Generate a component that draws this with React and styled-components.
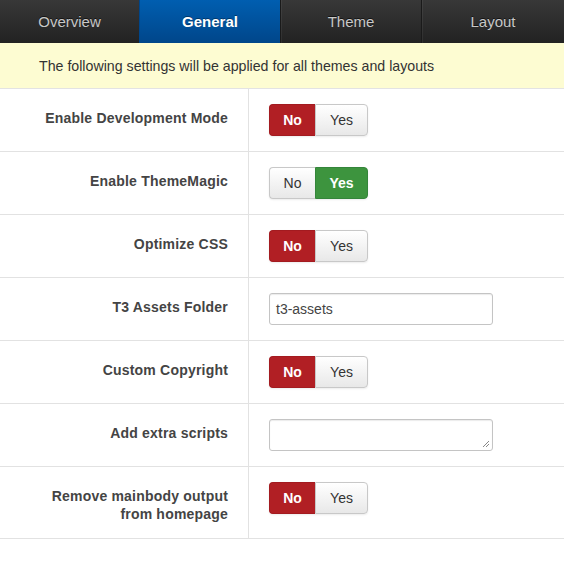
import React from "react";
import styled, { createGlobalStyle, css } from "styled-components";

const GlobalStyle = createGlobalStyle`
  html, body { margin: 0; padding: 0; background: #fff; }
  body { font-family: "Liberation Sans", Arial, sans-serif; color: #333; }
  * { box-sizing: border-box; }
`;

const Page = styled.div`
  width: 564px;
  background: #fff;
`;

const TabBar = styled.nav`
  display: grid;
  grid-template-columns: 139px 141px 141px 1fr;
  height: 43px;
  background: linear-gradient(#383838, #222222);
`;

const Tab = styled.div`
  display: flex;
  align-items: center;
  justify-content: center;
  font-size: 15px;
  color: #c8c8c8;
  text-shadow: 0 -1px 0 rgba(0, 0, 0, 0.6);
  border-left: 1px solid #1a1a1a;
  box-shadow: inset 1px 0 0 rgba(255, 255, 255, 0.06);
  &:first-child { border-left: none; box-shadow: none; }
  ${(p) =>
    p.$active &&
    css`
      background: linear-gradient(#005eb0, #00468a);
      color: #fff;
      font-weight: bold;
      border-left-color: #00468a;
      box-shadow: none;
      text-shadow: 0 -1px 0 rgba(0, 0, 0, 0.35);
    `}
`;

const Notice = styled.div`
  height: 46px;
  display: flex;
  align-items: center;
  padding-left: 39px;
  background: #fdfcd2;
  border-bottom: 1px solid #e3e3e3;
  font-size: 14.2px;
  color: #333;
`;

const Row = styled.div`
  display: grid;
  grid-template-columns: 249px 1fr;
  border-bottom: 1px solid #e2e2e2;
`;

const Label = styled.div`
  border-right: 1px solid #e2e2e2;
  padding: 20px 20px 15px 0;
  text-align: right;
  font-size: 14px;
  font-weight: bold;
  letter-spacing: 0.2px;
  line-height: 18px;
  color: #444;
`;

const Control = styled.div`
  padding: 15px 0 15px 20px;
  display: flex;
  align-items: flex-start;
`;

const Toggle = styled.div`
  display: inline-flex;
  height: 32px;
  border-radius: 4px;
  box-shadow: 0 1px 2px rgba(0, 0, 0, 0.08);
`;

const ToggleBtn = styled.div`
  display: flex;
  align-items: center;
  justify-content: center;
  width: ${(p) => p.$w}px;
  font-size: 14px;
  color: #333;
  background: linear-gradient(#ffffff, #e8e8e8);
  border: 1px solid #c8c8c8;
  &:first-child { border-radius: 4px 0 0 4px; border-right: none; }
  &:last-child { border-radius: 0 4px 4px 0; }
  ${(p) =>
    p.$on === "no" &&
    css`
      background: #b11f24;
      border-color: #a31b20;
      color: #fff;
      font-weight: bold;
    `}
  ${(p) =>
    p.$on === "yes" &&
    css`
      background: #3d943e;
      border-color: #34853a;
      color: #fff;
      font-weight: bold;
    `}
`;

const TextInput = styled.div`
  width: 224px;
  height: 32px;
  border: 1px solid #c4c4c4;
  border-radius: 3px;
  box-shadow: inset 0 1px 1px rgba(0, 0, 0, 0.08);
  padding: 0 6px;
  display: flex;
  align-items: center;
  font-size: 14px;
  color: #444;
  position: relative;
`;

const Grip = styled.svg`
  position: absolute;
  right: 2px;
  bottom: 2px;
`;

function YesNo({ value }) {
  return (
    <Toggle>
      <ToggleBtn $w={46} $on={value === "no" ? "no" : undefined}>No</ToggleBtn>
      <ToggleBtn $w={53} $on={value === "yes" ? "yes" : undefined}>Yes</ToggleBtn>
    </Toggle>
  );
}

const rows = [
  { label: "Enable Development Mode", kind: "toggle", value: "no" },
  { label: "Enable ThemeMagic", kind: "toggle", value: "yes" },
  { label: "Optimize CSS", kind: "toggle", value: "no" },
  { label: "T3 Assets Folder", kind: "input", value: "t3-assets" },
  { label: "Custom Copyright", kind: "toggle", value: "no" },
  { label: "Add extra scripts", kind: "textarea" },
  { label: ["Remove mainbody output", "from homepage"], kind: "toggle", value: "no" },
];

export default function App() {
  return (
    <Page>
      <GlobalStyle />
      <TabBar>
        <Tab>Overview</Tab>
        <Tab $active>General</Tab>
        <Tab>Theme</Tab>
        <Tab>Layout</Tab>
      </TabBar>
      <Notice>The following settings will be applied for all themes and layouts</Notice>
      {rows.map((r, i) => (
        <Row key={i}>
          <Label>
            {Array.isArray(r.label)
              ? r.label.map((l, j) => <div key={j}>{l}</div>)
              : r.label}
          </Label>
          <Control>
            {r.kind === "toggle" && <YesNo value={r.value} />}
            {r.kind === "input" && <TextInput>{r.value}</TextInput>}
            {r.kind === "textarea" && (
              <TextInput>
                <Grip width="8" height="8" viewBox="0 0 8 8">
                  <path d="M7 1 L1 7 M7 4 L4 7" stroke="#888" strokeWidth="1" />
                </Grip>
              </TextInput>
            )}
          </Control>
        </Row>
      ))}
    </Page>
  );
}
